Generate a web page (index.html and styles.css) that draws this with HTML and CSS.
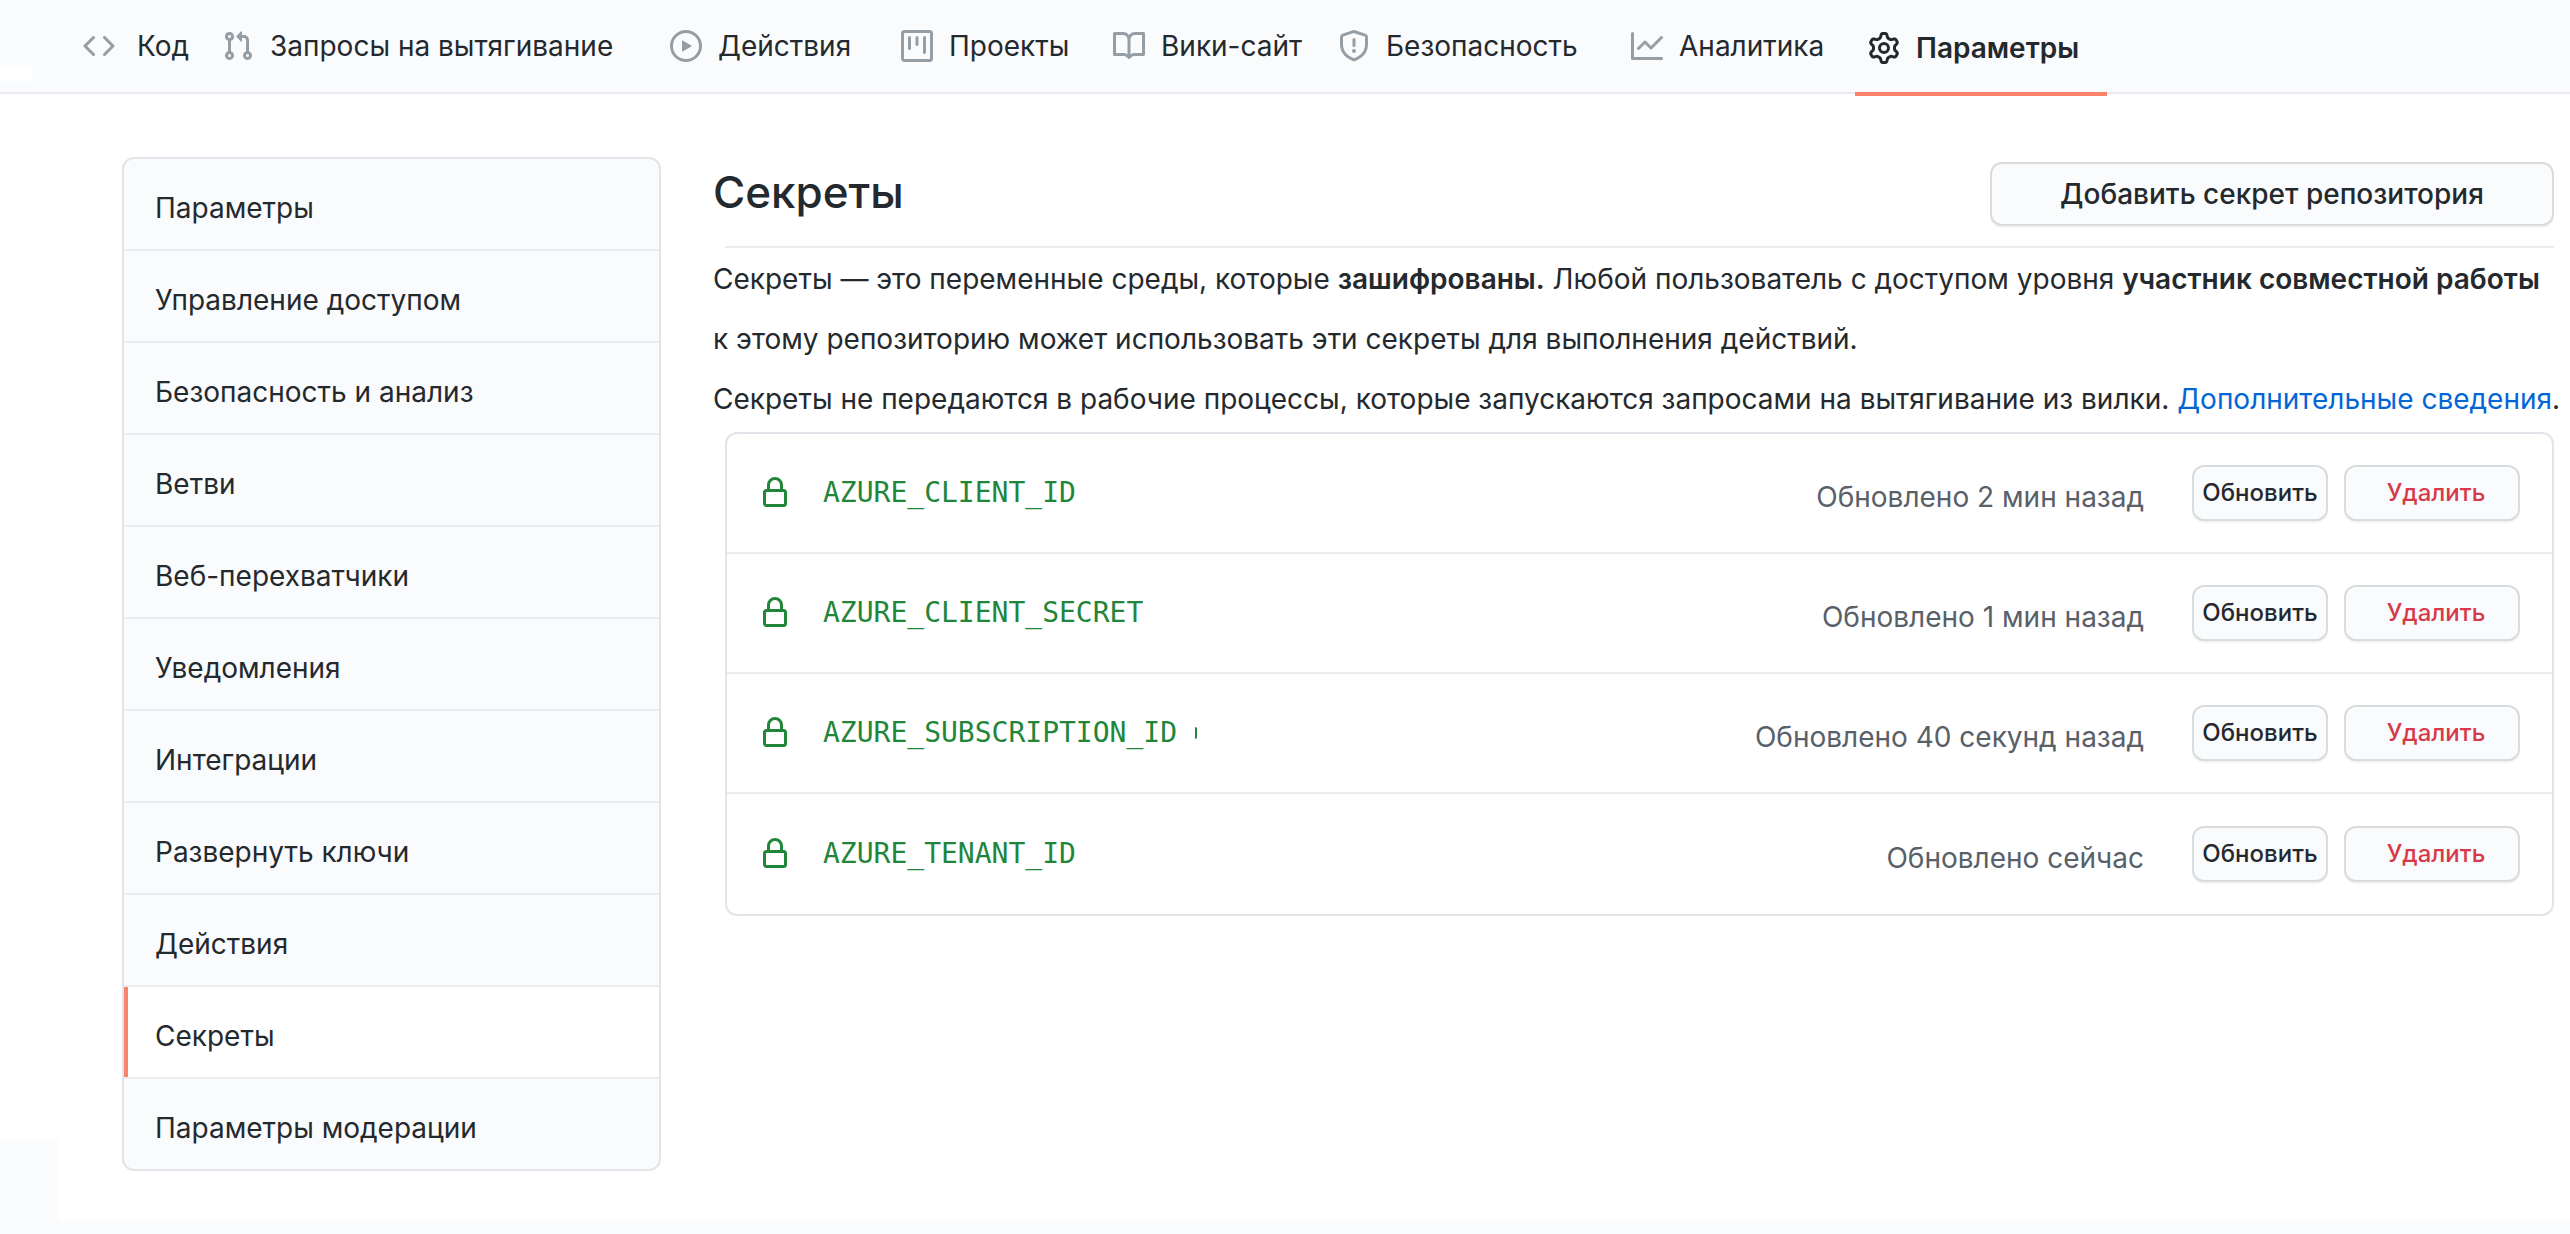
FILE: index.html
```html
<!DOCTYPE html>
<html lang="ru">
<head>
<meta charset="utf-8">
<title>Секреты</title>
<link rel="stylesheet" href="styles.css">
</head>
<body>
<header class="topbar">
  <nav class="tabs" aria-label="Репозиторий">
    <a class="tab tab-code" href="#"><svg class="icon" viewBox="0 0 16 16"><path d="M4.72 3.22a.75.75 0 011.06 1.06L2.06 8l3.72 3.72a.75.75 0 11-1.06 1.06L.47 8.53a.75.75 0 010-1.06l4.25-4.25zm6.56 0a.75.75 0 10-1.06 1.06L13.94 8l-3.72 3.72a.75.75 0 101.06 1.06l4.25-4.25a.75.75 0 000-1.06l-4.25-4.25z"/></svg>Код</a>
    <a class="tab" href="#"><svg class="icon" viewBox="0 0 16 16"><path fill-rule="evenodd" d="M7.177 3.073L9.573.677A.25.25 0 0110 .854v4.792a.25.25 0 01-.427.177L7.177 3.427a.25.25 0 010-.354zM3.75 2.5a.75.75 0 100 1.5.75.75 0 000-1.5zm-2.25.75a2.25 2.25 0 113 2.122v5.256a2.251 2.251 0 11-1.5 0V5.372A2.25 2.25 0 011.5 3.25zM11 2.5h-1V4h1a1 1 0 011 1v5.628a2.251 2.251 0 101.5 0V5A2.5 2.5 0 0011 2.5zm1 10.25a.75.75 0 111.5 0 .75.75 0 01-1.5 0zM3.75 12a.75.75 0 100 1.5.75.75 0 000-1.5z"/></svg>Запросы на вытягивание</a>
    <a class="tab" href="#"><svg class="icon" viewBox="0 0 16 16"><path fill-rule="evenodd" d="M1.5 8a6.5 6.5 0 1113 0 6.5 6.5 0 01-13 0zM8 0a8 8 0 100 16A8 8 0 008 0zM6.379 5.227A.25.25 0 006 5.442v5.117a.25.25 0 00.379.214l4.264-2.559a.25.25 0 000-.428L6.379 5.227z"/></svg>Действия</a>
    <a class="tab" href="#"><svg class="icon" viewBox="0 0 16 16"><path fill-rule="evenodd" d="M1.75 0A1.75 1.75 0 000 1.75v12.5C0 15.216.784 16 1.75 16h12.5A1.75 1.75 0 0016 14.25V1.75A1.75 1.75 0 0014.25 0H1.75zM1.5 1.75a.25.25 0 01.25-.25h12.5a.25.25 0 01.25.25v12.5a.25.25 0 01-.25.25H1.75a.25.25 0 01-.25-.25V1.75zM11.75 3a.75.75 0 00-.75.75v7.5a.75.75 0 001.5 0v-7.5a.75.75 0 00-.75-.75zm-8.25.75a.75.75 0 011.5 0v5.5a.75.75 0 01-1.5 0v-5.5zM8 3a.75.75 0 00-.75.75v3.5a.75.75 0 001.5 0v-3.5A.75.75 0 008 3z"/></svg>Проекты</a>
    <a class="tab" href="#"><svg class="icon" viewBox="0 0 16 16"><path fill-rule="evenodd" d="M0 1.75A.75.75 0 01.75 1h4.253c1.227 0 2.317.59 3 1.501A3.744 3.744 0 0111.006 1h4.245a.75.75 0 01.75.75v10.5a.75.75 0 01-.75.75h-4.507a2.25 2.25 0 00-1.591.659l-.622.621a.75.75 0 01-1.06 0l-.622-.621A2.25 2.25 0 005.258 13H.75a.75.75 0 01-.75-.75V1.75zm8.755 3a2.25 2.25 0 012.25-2.25H14.5v9h-3.757c-.71 0-1.4.201-1.992.572l.004-7.322zm-1.504 7.324l.004-5.073-.002-2.253A2.25 2.25 0 005.003 2.5H1.5v9h3.757a3.75 3.75 0 011.994.574z"/></svg>Вики-сайт</a>
    <a class="tab" href="#"><svg class="icon" viewBox="0 0 16 16"><path fill-rule="evenodd" d="M7.467.133a1.75 1.75 0 011.066 0l5.25 1.68A1.75 1.75 0 0115 3.48V7c0 1.566-.32 3.182-1.303 4.682-.983 1.498-2.585 2.813-5.032 3.855a1.7 1.7 0 01-1.33 0c-2.447-1.042-4.049-2.357-5.032-3.855C1.32 10.182 1 8.566 1 7V3.48a1.75 1.75 0 011.217-1.667l5.25-1.68zm.61 1.429a.25.25 0 00-.153 0l-5.25 1.68a.25.25 0 00-.174.238V7c0 1.358.275 2.666 1.057 3.86.784 1.194 2.121 2.34 4.366 3.297a.2.2 0 00.154 0c2.245-.956 3.582-2.104 4.366-3.298C13.225 9.666 13.5 8.36 13.5 7V3.48a.25.25 0 00-.174-.237l-5.25-1.68zM9 10.5a1 1 0 11-2 0 1 1 0 012 0zm-.25-5.75a.75.75 0 10-1.5 0v3a.75.75 0 001.5 0v-3z"/></svg>Безопасность</a>
    <a class="tab" href="#"><svg class="icon" viewBox="0 0 16 16"><path fill-rule="evenodd" d="M1.5 1.75a.75.75 0 00-1.5 0v12.5c0 .414.336.75.75.75h14.5a.75.75 0 000-1.5H1.5V1.75zm14.28 2.53a.75.75 0 00-1.06-1.06L10 7.94 7.53 5.47a.75.75 0 00-1.06 0L3.22 8.72a.75.75 0 001.06 1.06L7 7.06l2.47 2.47a.75.75 0 001.06 0l5.25-5.25z"/></svg>Аналитика</a>
    <a class="tab tab-current" href="#" aria-current="page"><svg class="icon" viewBox="0 0 16 16"><path fill-rule="evenodd" d="M7.429 1.525a6.593 6.593 0 011.142 0c.036.003.108.036.137.146l.289 1.105c.147.56.55.967.997 1.189.174.086.341.183.501.29.417.278.97.423 1.53.27l1.102-.303c.11-.03.175.016.195.046.219.31.41.641.573.989.014.031.022.11-.059.19l-.815.806c-.411.406-.562.957-.53 1.456a4.588 4.588 0 010 .582c-.032.499.119 1.05.53 1.456l.815.806c.08.08.073.159.059.19a6.494 6.494 0 01-.573.99c-.02.029-.086.074-.195.045l-1.103-.303c-.559-.153-1.112-.008-1.529.27-.16.107-.327.204-.5.29-.449.222-.851.628-.998 1.189l-.289 1.105c-.029.11-.101.143-.137.146a6.613 6.613 0 01-1.142 0c-.036-.003-.108-.037-.137-.146l-.289-1.105c-.147-.56-.55-.967-.997-1.189a4.502 4.502 0 01-.501-.29c-.417-.278-.97-.423-1.53-.27l-1.102.303c-.11.03-.175-.016-.195-.046a6.492 6.492 0 01-.573-.989c-.014-.031-.022-.11.059-.19l.815-.806c.411-.406.562-.957.53-1.456a4.587 4.587 0 010-.582c.032-.499-.119-1.05-.53-1.456l-.815-.806c-.08-.08-.073-.159-.059-.19a6.44 6.44 0 01.573-.99c.02-.029.086-.075.195-.045l1.103.303c.559.153 1.112.008 1.529-.27.16-.107.327-.204.5-.29.449-.222.851-.628.998-1.189l.289-1.105c.029-.11.101-.143.137-.146zM8 0c-.236 0-.47.01-.701.03-.743.065-1.29.615-1.458 1.261l-.29 1.106c-.017.066-.078.158-.211.224a5.994 5.994 0 00-.668.386c-.123.082-.233.09-.3.071L3.27 2.776c-.644-.177-1.392.02-1.82.63a7.977 7.977 0 00-.704 1.217c-.315.675-.111 1.422.363 1.891l.815.806c.05.048.098.147.088.294a6.084 6.084 0 000 .772c.01.147-.038.246-.088.294l-.815.806c-.474.469-.678 1.216-.363 1.891.2.428.436.835.704 1.218.428.609 1.176.806 1.82.63l1.103-.303c.066-.019.176-.011.299.071.213.143.436.272.668.386.133.066.194.158.212.224l.289 1.106c.169.646.715 1.196 1.458 1.26a8.094 8.094 0 001.402 0c.743-.064 1.29-.614 1.458-1.26l.29-1.106c.017-.066.078-.158.211-.224a5.98 5.98 0 00.668-.386c.123-.082.233-.09.3-.071l1.102.302c.644.177 1.392-.02 1.82-.63.268-.382.505-.789.704-1.217.315-.675.111-1.422-.364-1.891l-.814-.806c-.05-.048-.098-.147-.088-.294a6.1 6.1 0 000-.772c-.01-.147.039-.246.088-.294l.814-.806c.475-.469.679-1.216.364-1.891a7.992 7.992 0 00-.704-1.218c-.428-.609-1.176-.806-1.82-.63l-1.103.303c-.066.019-.176.011-.299-.071a5.991 5.991 0 00-.668-.386c-.133-.066-.194-.158-.212-.224L10.16 1.29C9.99.645 9.444.095 8.701.031A8.094 8.094 0 008 0zm1.5 8a1.5 1.5 0 11-3 0 1.5 1.5 0 013 0zM11 8a3 3 0 11-6 0 3 3 0 016 0z"/></svg>Параметры</a>
  </nav>
</header>
<div class="layout">
  <nav class="menu" aria-label="Параметры">
    <a class="menu-item" href="#">Параметры</a>
    <a class="menu-item" href="#">Управление доступом</a>
    <a class="menu-item" href="#">Безопасность и анализ</a>
    <a class="menu-item" href="#">Ветви</a>
    <a class="menu-item" href="#">Веб-перехватчики</a>
    <a class="menu-item" href="#">Уведомления</a>
    <a class="menu-item" href="#">Интеграции</a>
    <a class="menu-item" href="#">Развернуть ключи</a>
    <a class="menu-item" href="#">Действия</a>
    <a class="menu-item menu-current" href="#" aria-current="page">Секреты</a>
    <a class="menu-item" href="#">Параметры модерации</a>
  </nav>
  <main class="content">
    <div class="heading">
      <h1 class="title">Секреты</h1>
      <button class="button button-add" type="button">Добавить секрет репозитория</button>
    </div>
    <hr class="rule">
    <div class="intro">
      <p>Секреты — это переменные среды, которые <strong>зашифрованы.</strong> Любой пользователь с доступом уровня <strong>участник совместной работы</strong><br>к этому репозиторию может использовать эти секреты для выполнения действий.</p>
      <p>Секреты не передаются в рабочие процессы, которые запускаются запросами на вытягивание из вилки. <a class="link" href="#">Дополнительные сведения</a>.</p>
    </div>
    <ul class="secrets">
      <li class="secret">
        <svg class="icon lock" viewBox="0 0 16 16"><path fill-rule="evenodd" d="M4 4v2h-.25A1.75 1.75 0 002 7.75v5.5c0 .966.784 1.75 1.75 1.75h8.5A1.75 1.75 0 0014 13.25v-5.5A1.75 1.75 0 0012.25 6H12V4a4 4 0 10-8 0zm6.5 2V4a2.5 2.5 0 10-5 0v2h5zM12 7.5h.25a.25.25 0 01.25.25v5.5a.25.25 0 01-.25.25h-8.5a.25.25 0 01-.25-.25v-5.5a.25.25 0 01.25-.25H12z"/></svg>
        <code class="name">AZURE_CLIENT_ID</code>
        <span class="updated">Обновлено 2 мин назад</span>
        <button class="button button-row" type="button">Обновить</button>
        <button class="button button-row button-danger" type="button">Удалить</button>
      </li>
      <li class="secret">
        <svg class="icon lock" viewBox="0 0 16 16"><path fill-rule="evenodd" d="M4 4v2h-.25A1.75 1.75 0 002 7.75v5.5c0 .966.784 1.75 1.75 1.75h8.5A1.75 1.75 0 0014 13.25v-5.5A1.75 1.75 0 0012.25 6H12V4a4 4 0 10-8 0zm6.5 2V4a2.5 2.5 0 10-5 0v2h5zM12 7.5h.25a.25.25 0 01.25.25v5.5a.25.25 0 01-.25.25h-8.5a.25.25 0 01-.25-.25v-5.5a.25.25 0 01.25-.25H12z"/></svg>
        <code class="name">AZURE_CLIENT_SECRET</code>
        <span class="updated">Обновлено 1 мин назад</span>
        <button class="button button-row" type="button">Обновить</button>
        <button class="button button-row button-danger" type="button">Удалить</button>
      </li>
      <li class="secret">
        <svg class="icon lock" viewBox="0 0 16 16"><path fill-rule="evenodd" d="M4 4v2h-.25A1.75 1.75 0 002 7.75v5.5c0 .966.784 1.75 1.75 1.75h8.5A1.75 1.75 0 0014 13.25v-5.5A1.75 1.75 0 0012.25 6H12V4a4 4 0 10-8 0zm6.5 2V4a2.5 2.5 0 10-5 0v2h5zM12 7.5h.25a.25.25 0 01.25.25v5.5a.25.25 0 01-.25.25h-8.5a.25.25 0 01-.25-.25v-5.5a.25.25 0 01.25-.25H12z"/></svg>
        <code class="name">AZURE_SUBSCRIPTION_ID</code><span class="sliver"></span>
        <span class="updated">Обновлено 40 секунд назад</span>
        <button class="button button-row" type="button">Обновить</button>
        <button class="button button-row button-danger" type="button">Удалить</button>
      </li>
      <li class="secret">
        <svg class="icon lock" viewBox="0 0 16 16"><path fill-rule="evenodd" d="M4 4v2h-.25A1.75 1.75 0 002 7.75v5.5c0 .966.784 1.75 1.75 1.75h8.5A1.75 1.75 0 0014 13.25v-5.5A1.75 1.75 0 0012.25 6H12V4a4 4 0 10-8 0zm6.5 2V4a2.5 2.5 0 10-5 0v2h5zM12 7.5h.25a.25.25 0 01.25.25v5.5a.25.25 0 01-.25.25h-8.5a.25.25 0 01-.25-.25v-5.5a.25.25 0 01.25-.25H12z"/></svg>
        <code class="name">AZURE_TENANT_ID</code>
        <span class="updated">Обновлено сейчас</span>
        <button class="button button-row" type="button">Обновить</button>
        <button class="button button-row button-danger" type="button">Удалить</button>
      </li>
    </ul>
  </main>
</div>
</body>
</html>
```

FILE: styles.css
```css
* { box-sizing: border-box; }

body {
  margin: 0;
  min-height: 100vh;
  display: flex;
  flex-direction: column;
  background: #fafbfd;
  color: #24292e;
  font: 400 28px/60px Inter, "Liberation Sans", sans-serif;
}

a { color: inherit; text-decoration: none; }

/* Stacked above the page so the current tab's underline stays visible. */
.topbar {
  position: relative;
  height: 94px;
  border-bottom: 2px solid #e9eaee;
  background: linear-gradient(#fff, #fff) 0 65px / 32px 16px no-repeat #fafbfd;
}

.tabs {
  display: grid;
  grid-template-columns: 139px 448px 231px 212px 225px 293px 224px max-content;
  padding-left: 83px;
}

.tab {
  display: flex;
  align-items: center;
  gap: 16px;
  height: 92px;
  white-space: nowrap;
}

.tab-code { gap: 22px; }

.tab-current {
  height: 96px;
  padding: 4px 28px 0 13px;
  border-bottom: 4px solid #fd826c;
  font-weight: 600;
}

.icon {
  flex: none;
  width: 32px;
  height: 32px;
  fill: #959da5;
}

.tab-current .icon { fill: #24292e; }

.layout {
  flex: 1;
  display: grid;
  grid-template-columns: 539px minmax(0, 1fr);
  align-items: start;
  gap: 52px;
  margin-bottom: 14px;
  padding: 63px 16px 48px 122px;
  background: linear-gradient(#fafbfd, #fafbfd) 0 100% / 58px 80px no-repeat #fff;
}

.menu {
  border: 2px solid #e1e4e8;
  border-radius: 12px;
  background: #fafbfd;
  overflow: hidden;
}

.menu-item {
  display: block;
  height: 92px;
  padding: 19px 0 0 31px;
  border-bottom: 2px solid #eaecef;
}

.menu-item:last-child { height: 90px; border-bottom: 0; }

.menu-current {
  background: linear-gradient(#fa836f, #fa836f) 0 0 / 4px 100% no-repeat #fff;
}

.heading {
  display: flex;
  align-items: center;
  justify-content: space-between;
  padding-top: 5px;
}

.title {
  margin: 0;
  padding-bottom: 4px;
  font-size: 44px;
  font-weight: 500;
}

.button {
  border: 2px solid #d9dbdc;
  border-radius: 12px;
  background: #fafbfd;
  box-shadow: 0 2px 0 #f3f4f5;
  color: #24292e;
  font: inherit;
  font-weight: 500;
  white-space: nowrap;
}

.button-add {
  width: 564px;
  height: 64px;
  line-height: 58px;
}

.rule {
  height: 2px;
  margin: 20px 0 0 12px;
  border: 0;
  background: #eaecef;
}

.intro {
  margin-right: -14px;
  padding: 1px 0 3px;
}

.intro p { margin: 0; }
.intro strong { font-weight: 600; }
.link { color: #0366d6; }

.secrets {
  margin: 0 0 0 12px;
  padding: 0;
  border: 2px solid #e1e4e8;
  border-radius: 12px;
  list-style: none;
}

.secret {
  display: flex;
  align-items: center;
  height: 120px;
  padding: 0 32px;
  border-bottom: 2px solid #eaecef;
}

.secret:last-child { border-bottom: 0; }

.lock { fill: #22863a; }

.name {
  margin-left: 32px;
  color: #22863a;
  font: 28px/60px "DejaVu Sans Mono", monospace;
}

.sliver {
  width: 2px;
  height: 12px;
  margin-left: 18px;
  border-radius: 0 2px 2px 0;
  background: #22863a;
}

.updated {
  margin: 8px 32px 0 auto;
  color: #586069;
}

.button-row {
  width: 136px;
  height: 56px;
  margin-left: 16px;
  padding: 0;
  font-size: 24px;
  line-height: 52px;
}

.button-danger {
  width: 176px;
  padding-left: 8px;
  color: #d73a49;
}
```
